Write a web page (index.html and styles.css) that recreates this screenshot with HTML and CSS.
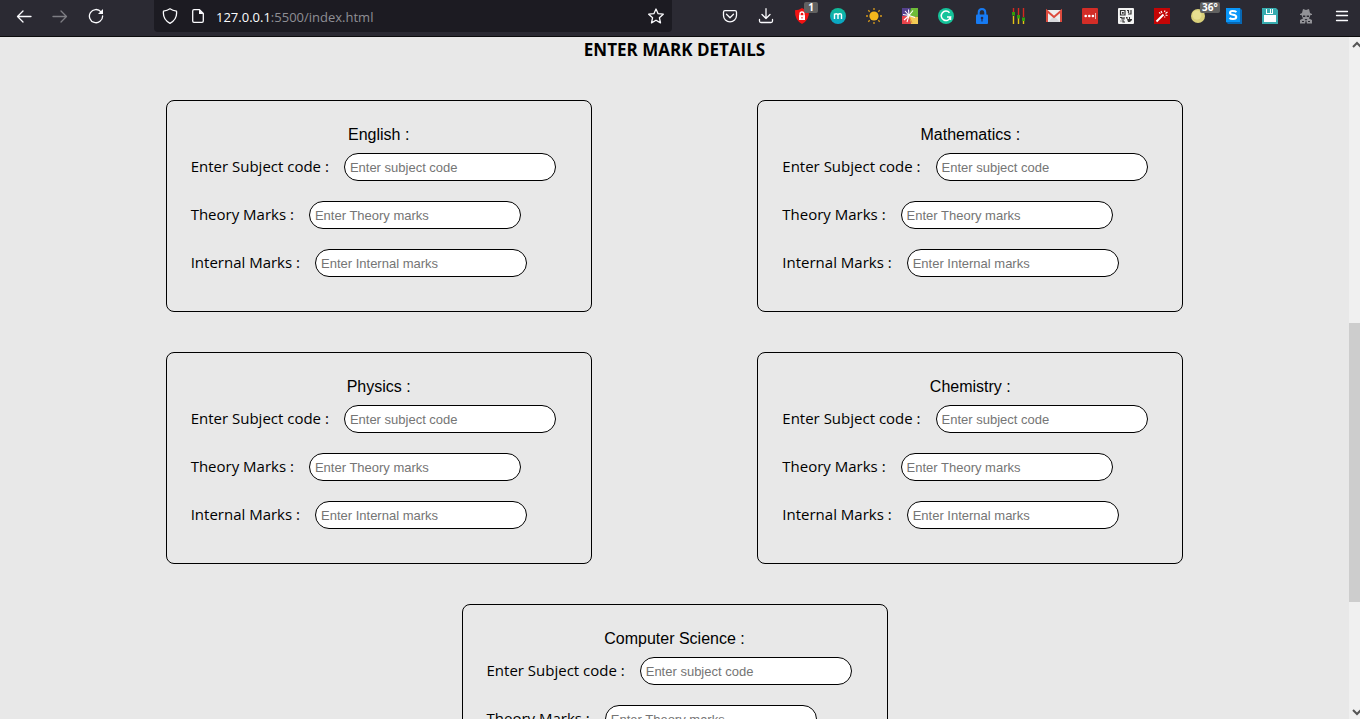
FILE: index.html
```html
<!DOCTYPE html>
<html lang="en">
<head>
<meta charset="utf-8">
<title>Mark details</title>
<link rel="stylesheet" href="styles.css">
</head>
<body>
<header class="toolbar">
  <nav class="nav">
    <button class="tool" aria-label="Back"><svg viewBox="0 0 16 16"><path class="line" d="M15 8.500H1.500M7 3L1.500 8.500L7 14"/></svg></button>
    <button class="tool dim" aria-label="Forward"><svg viewBox="0 0 16 16"><path class="line" d="M1 8.500H14.500M9 3L14.500 8.500L9 14"/></svg></button>
    <button class="tool" aria-label="Reload"><svg viewBox="0 0 16 16"><path class="line" d="M13 3.800A6.600 6.600 0 1 0 14.600 8"/><path fill="#fbfbfe" d="M15 1V6H10z"/></svg></button>
  </nav>
  <div class="address">
    <span class="site">
      <svg viewBox="0 0 16 16"><path class="line" d="M8 .8Q10.500 2.600 14.500 3.200Q15.500 11.500 8 15.300Q.5 11.500 1.500 3.200Q5.500 2.600 8 .8z"/></svg>
      <svg viewBox="0 0 16 16"><path class="line" d="M9.500 1.700H4Q2.700 1.700 2.700 3V13Q2.700 14.300 4 14.300H12Q13.300 14.300 13.300 13V5.500z"/><path fill="#fbfbfe" d="M9 1.500V6H13.600z"/></svg>
    </span>
    <span class="url"><span class="host">127.0.0.1</span>:5500/index.html</span>
    <button class="tool star" aria-label="Bookmark"><svg viewBox="0 0 16 16"><path class="line" d="M8 1L10.100 5.700L15.300 6.200L11.400 9.700L12.500 14.900L8 12.200L3.500 14.900L4.600 9.700L.7 6.200L5.900 5.700z"/></svg></button>
  </div>
  <div class="tools">
    <button class="tool" aria-label="Pocket"><svg viewBox="0 0 16 16"><path class="line" d="M3 2.700H13Q14.500 2.700 14.500 4.200V7.500C14.500 11 11.500 13.800 8 13.800S1.500 11 1.500 7.500V4.200Q1.500 2.700 3 2.700zM4.500 6.300L8 9.700L11.500 6.300"/></svg></button>
    <button class="tool" aria-label="Downloads"><svg viewBox="0 0 16 16"><path class="line" d="M8 .7V10.500M4 6.500L8 10.500L12 6.500M1.500 11.500V13Q1.500 14.500 3 14.500H13Q14.500 14.500 14.500 13V11.500"/></svg></button>
    <button class="tool" aria-label="Ad blocker"><svg viewBox="0 0 16 16"><path fill="#f11313" d="M8 0Q11 2.200 15 2.300Q15.500 12 8 16Q.5 12 1 2.300Q5 2.200 8 0z"/><path fill="#fff" d="M5 7.200H11V12H5z"/><path fill="none" stroke="#fff" stroke-width="1.300" d="M6 8V6Q6 4 8 4T10 6V8"/><path fill="#f11313" d="M7.500 9H8.500V10.500H7.500z"/></svg><span class="badge">1</span></button>
    <button class="tool" aria-label="Mail extension"><svg viewBox="0 0 16 16"><defs><linearGradient id="teal" x2="0" y2="1"><stop stop-color="#11ba96"/><stop offset="1" stop-color="#0aa5c8"/></linearGradient></defs><circle cx="8" cy="8" r="8" fill="url(#teal)"/><path fill="none" stroke="#fff" stroke-width="1.400" d="M4.500 11V5.500M4.500 7Q4.700 5.700 6.200 5.700T8 7.200V11M8 7.200Q8 5.700 9.800 5.700T11.500 7.200V11"/></svg></button>
    <button class="tool" aria-label="Brightness"><svg viewBox="0 0 16 16"><circle cx="8" cy="8" r="4.600" fill="#f5b71c"/><path stroke="#d99b1c" stroke-width="1.300" d="M8 0V2M8 14V16M0 8H2M14 8H16M2.300 2.300L3.700 3.700M12.300 12.300L13.700 13.700M2.300 13.700L3.700 12.300M12.300 3.700L13.700 2.300"/></svg></button>
    <button class="tool" aria-label="Colour burst"><svg viewBox="0 0 16 16"><path fill="#54418d" d="M0 0H9L7 8H0z"/><path fill="#6ebc38" d="M9 0H16V9L7 8z"/><path fill="#e8434b" d="M0 8H7L9 16H0z"/><path fill="#f3cc55" d="M7 8L16 9V16H9z"/><path fill="none" stroke="#fff" stroke-width="1.100" d="M7 7.500L3 3M7 7.500L6.500 1.500M7 7.500L11 2.500M7 7.500L1 6.500M7 7.500L2 12M7 7.500L5 14M7 7.500L13 9.500"/><path stroke="#f08a38" d="M7.500 9L10 15"/></svg></button>
    <button class="tool" aria-label="Grammar"><svg viewBox="0 0 16 16"><circle cx="8" cy="8" r="8" fill="#15c39a"/><path fill="none" stroke="#fff" stroke-width="1.500" d="M11.500 4.700A4.700 4.700 0 1 0 12.500 9H9M12.500 8.500V12"/></svg></button>
    <button class="tool" aria-label="Password lock"><svg viewBox="0 0 16 16"><rect x="2" y="6.500" width="12" height="9.500" rx="1" fill="#177bf3"/><path fill="none" stroke="#177bf3" stroke-width="2" d="M4.700 7V4.500Q4.700 1 8 1T11.300 4.500V7"/><circle cx="8" cy="10" r="1.300" fill="#202b55"/><path fill="#202b55" d="M7.400 10H8.600V13.500H7.400z"/></svg></button>
    <button class="tool" aria-label="Equalizer"><svg viewBox="0 0 16 16"><path stroke="#d42920" stroke-width="1.400" d="M3.500 0V4M8.500 0V7M13.500 0V9"/><path stroke="#e3c415" stroke-width="1.400" d="M3.500 8V16M8.500 10V16M13.500 13V16"/><path fill="#329d0b" d="M2 4H5V7.500H2zM7 7H10V10.500H7zM12 9.500H15V13H12z"/></svg></button>
    <button class="tool" aria-label="Gmail"><svg viewBox="0 0 16 16"><path fill="#eee" d="M0 2H16V14H0z"/><path fill="#d8dadd" d="M2 14L8 8L14 14z"/><path fill="none" stroke="#dd4b3e" stroke-width="2" d="M1 14V3L8 9L15 3V14"/></svg></button>
    <button class="tool" aria-label="Passwords"><svg viewBox="0 0 16 16"><rect width="16" height="16" rx="1" fill="#d32d27"/><circle cx="3.700" cy="8" r="1.300" fill="#fff"/><circle cx="7.300" cy="8" r="1.300" fill="#fff"/><circle cx="10.900" cy="8" r="1.300" fill="#fff"/><path stroke="#f4b5b2" d="M13.500 5V11"/></svg></button>
    <button class="tool" aria-label="QR code"><svg viewBox="0 0 16 16"><rect width="16" height="16" rx="1" fill="#f3f3f3"/><path fill="none" stroke="#333" stroke-width="1.200" d="M2.500 2.500H7V7H2.500zM9 2.500H10.500V5M13 2V6H10M2 9.500H4V11H6V9M8 9.500H9V11M2.500 13H3.500M5 12V14H7"/><path fill="#333" d="M4 4H5.700V5.700H4zM9 11H11V9H12V11H14V12L12 14H10z"/></svg></button>
    <button class="tool" aria-label="Magic wand"><svg viewBox="0 0 16 16"><path fill="#c40505" d="M0 0H16V16H0z"/><path stroke="#fff" stroke-width="2" d="M2.500 13.500L9.500 6.500"/><path stroke="#fff" stroke-width="1.100" d="M7 3L8 5M11 2.500L10.500 4M13.500 4L11.500 5.500M13.500 7.500L11.500 7M5 4.500L6.500 5.500M11 9.500L10.500 8.500"/></svg></button>
    <button class="tool" aria-label="Weather"><svg viewBox="0 0 16 16"><circle cx="8" cy="8" r="7" fill="#d9d07b"/><circle cx="7" cy="7" r="4.500" fill="#e7df91"/></svg><span class="badge">36°</span></button>
    <button class="tool" aria-label="Stylus"><svg viewBox="0 0 16 16"><path fill="#0868b4" d="M14 0L16 2V16H2L0 14z"/><path fill="#0996f8" d="M0 0H14V14H0z"/><path fill="none" stroke="#fff" stroke-width="2" d="M10.500 4Q9 3 6.500 3Q4 3 4 5Q4 6.300 7 6.700T10.300 8.800Q10.300 11 7 11Q4.500 11 3.500 10"/></svg></button>
    <button class="tool" aria-label="Save page"><svg viewBox="0 0 16 16"><path fill="#38adb0" d="M0 0H14L16 2V16H0z"/><path fill="#fff" d="M2 7H14V14H2zM4 1H5V5H8V1H9V5H10V1H11V6H4z"/></svg></button>
    <button class="tool" aria-label="Private mode"><svg viewBox="0 0 16 16"><path fill="#929297" d="M5 1L8 2L11 1L12 5L14 6V7H2V6L4 5zM3.500 7H12.500L11 10.500L14 12V15.500H9L8 12L7 15.500H2V12L5 10.500z"/><path fill="#2b2a33" d="M5 7.500H7.300V9H5zM8.700 7.500H11V9H8.700zM6.500 11H9.500L8 12.500zM4 13H6V14H4zM10 13H12V14H10z"/></svg></button>
    <button class="tool" aria-label="Menu"><svg viewBox="0 0 16 16"><path class="line" d="M2.500 3.500H13.500M2.500 7.500H13.500M2.500 12.500H13.500"/></svg></button>
  </div>
</header>
<div class="viewport">
  <main class="page">
    <h1 class="heading">ENTER MARK DETAILS</h1>
    <form class="subjects">
      <div class="cards">
        <section class="card">
          <h2 class="subject">English :</h2>
          <label class="field">Enter Subject code : <input type="text" placeholder="Enter subject code"></label>
          <label class="field">Theory Marks : <input type="text" placeholder="Enter Theory marks"></label>
          <label class="field">Internal Marks : <input type="text" placeholder="Enter Internal marks"></label>
        </section>
        <section class="card">
          <h2 class="subject">Mathematics :</h2>
          <label class="field">Enter Subject code : <input type="text" placeholder="Enter subject code"></label>
          <label class="field">Theory Marks : <input type="text" placeholder="Enter Theory marks"></label>
          <label class="field">Internal Marks : <input type="text" placeholder="Enter Internal marks"></label>
        </section>
      </div>
      <div class="cards">
        <section class="card">
          <h2 class="subject">Physics :</h2>
          <label class="field">Enter Subject code : <input type="text" placeholder="Enter subject code"></label>
          <label class="field">Theory Marks : <input type="text" placeholder="Enter Theory marks"></label>
          <label class="field">Internal Marks : <input type="text" placeholder="Enter Internal marks"></label>
        </section>
        <section class="card">
          <h2 class="subject">Chemistry :</h2>
          <label class="field">Enter Subject code : <input type="text" placeholder="Enter subject code"></label>
          <label class="field">Theory Marks : <input type="text" placeholder="Enter Theory marks"></label>
          <label class="field">Internal Marks : <input type="text" placeholder="Enter Internal marks"></label>
        </section>
      </div>
      <div class="cards">
        <section class="card">
          <h2 class="subject">Computer Science :</h2>
          <label class="field">Enter Subject code : <input type="text" placeholder="Enter subject code"></label>
          <label class="field">Theory Marks : <input type="text" placeholder="Enter Theory marks"></label>
          <label class="field">Internal Marks : <input type="text" placeholder="Enter Internal marks"></label>
        </section>
      </div>
    </form>
  </main>
  <div class="scrollbar">
    <svg class="arrow" viewBox="0 0 11 15"><path d="M4 10L8 6L12 10"/></svg>
    <div class="track"><div class="thumb"></div></div>
    <svg class="arrow" viewBox="0 0 11 15"><path d="M4 6L8 10L12 6"/></svg>
  </div>
</div>
</body>
</html>
```

FILE: styles.css
```css
* {
  box-sizing: border-box;
}

body {
  display: flex;
  flex-direction: column;
  height: 100vh;
  margin: 0;
  overflow: hidden;
  background: #e8e8e8;
  color: #000;
  font: 15px/20px "Open Sans", "Noto Sans", sans-serif;
}

.toolbar {
  display: flex;
  flex: none;
  gap: 40px;
  padding: 0 0 4px 6px;
  border-bottom: 1px solid #0c0c0d;
  background: #2b2a33;
}

.nav,
.tools {
  display: flex;
  flex: none;
}

.tool {
  position: relative;
  display: flex;
  flex: none;
  align-items: center;
  justify-content: center;
  width: 36px;
  height: 32px;
  padding: 0;
  border: 0;
  background: none;
}

.star {
  width: 32px;
}

.toolbar svg {
  flex: none;
  width: 16px;
  height: 16px;
}

.line {
  fill: none;
  stroke: #fbfbfe;
  stroke-width: 1.3;
  stroke-linecap: round;
  stroke-linejoin: round;
}

.dim {
  opacity: 0.4;
}

.address {
  display: flex;
  flex: 1;
  align-items: center;
  gap: 10px;
  min-width: 0;
  padding-left: 8px;
  border-radius: 0 0 4px 4px;
  background: #1c1b22;
}

.site {
  display: flex;
  gap: 12px;
}

.url {
  flex: 1;
  overflow: hidden;
  padding-top: 2px;
  color: #8f8f95;
  font-size: 13px;
  line-height: 20px;
  white-space: nowrap;
}

.host {
  color: #fbfbfe;
}

.badge {
  position: absolute;
  top: 2px;
  left: 20px;
  min-width: 14px;
  padding: 0 2px;
  border-radius: 2px;
  background: #616161;
  color: #fff;
  font: bold 10px/11px "Open Sans", sans-serif;
}

.tool:has(.badge) .badge {
  text-align: center;
}

.viewport {
  display: flex;
  flex: 1;
  min-height: 0;
}

.page {
  flex: 1;
  min-width: 0;
  overflow: hidden;
}

.heading {
  margin: 0 0 37px;
  font-size: 17px;
  line-height: 26px;
  text-align: center;
}

.subjects {
  display: flex;
  flex-direction: column;
  gap: 40px;
}

.cards {
  display: flex;
  flex-wrap: wrap;
  justify-content: space-evenly;
  row-gap: 40px;
}

.card {
  display: flex;
  flex-direction: column;
  gap: 20px;
  width: 426px;
  padding: 24px 24px 34px;
  border: 1px solid #000;
  border-radius: 8px;
}

.subject {
  margin: 0 0 -12px;
  font: 16px/20px "Liberation Sans", Arial, sans-serif;
  text-align: center;
}

.field {
  display: flex;
  gap: 15px;
  line-height: 26px;
  white-space: nowrap;
}

.field input {
  width: 212px;
  height: 28px;
  padding: 1px 5px;
  border: 1px solid #000;
  border-radius: 14px;
  background: #fff;
  font: 13px "Liberation Sans", Arial, sans-serif;
}

.field input::placeholder {
  color: #757575;
}

.scrollbar {
  display: flex;
  flex: none;
  flex-direction: column;
  width: 11px;
  background: #f0f0f0;
}

.arrow {
  flex: none;
  width: 11px;
  height: 15px;
  fill: none;
  stroke: #555;
  stroke-width: 2;
}

.track {
  flex: 1;
  padding-top: 271px;
}

.thumb {
  height: 279px;
  background: #cdcdcd;
}
```
